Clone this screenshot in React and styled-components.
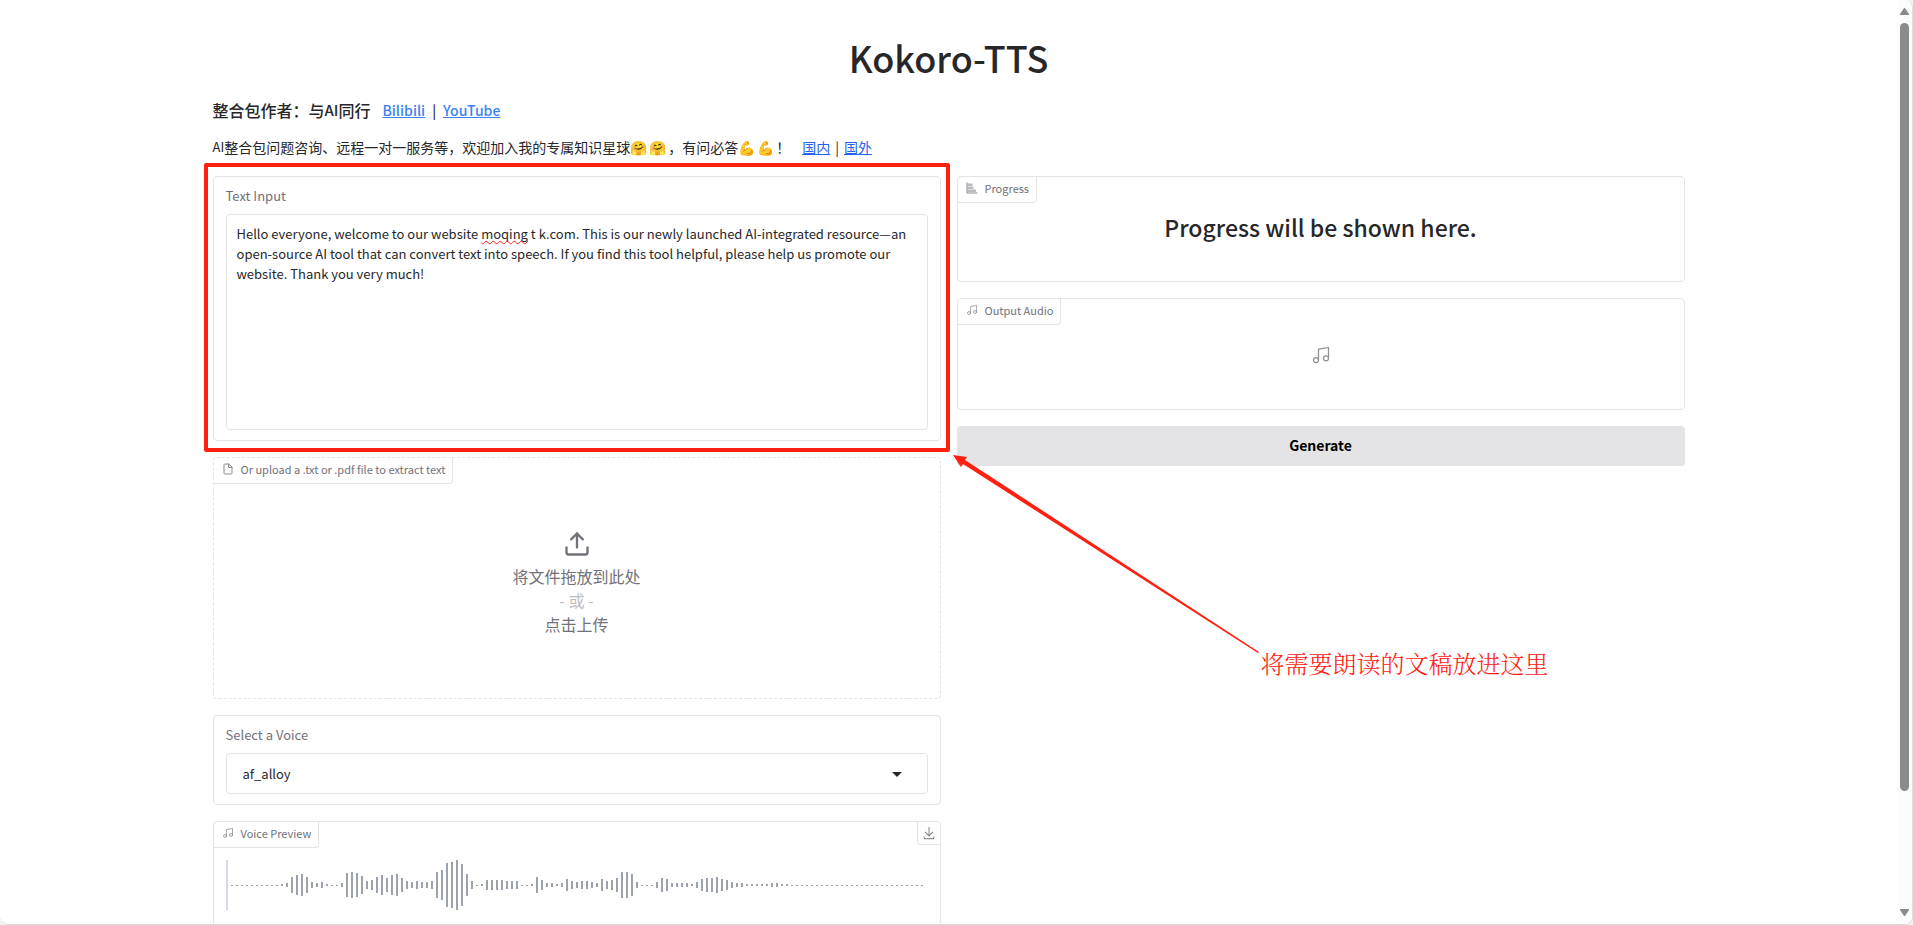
import React from 'react'
import styled, { createGlobalStyle } from 'styled-components'

const bars = [
    1, 1, 1, 1, 1, 1, 1, 1, 1, 1, 2, 4, 16, 20, 22, 16, 6, 4, 6, 2,
    1, 1, 4, 24, 26, 24, 18, 8, 10, 16, 20, 14, 20, 22, 14, 8, 6, 8, 6, 6,
    8, 26, 30, 44, 46, 50, 42, 22, 8, 1, 2, 10, 10, 10, 10, 8, 8, 8, 1, 1,
    2, 16, 10, 4, 4, 2, 4, 12, 8, 6, 8, 8, 6, 4, 12, 8, 10, 14, 26, 26,
    22, 6, 1, 1, 1, 6, 14, 12, 4, 4, 4, 4, 2, 6, 12, 14, 14, 16, 12, 10,
    6, 4, 4, 2, 2, 2, 2, 2, 4, 4, 2, 2,
    ...Array(27).fill(1),
]

const defaultText = 'Hello everyone, welcome to our website moqing t k.com. This is our newly launched AI-integrated resource—an open-source AI tool that can convert text into speech. If you find this tool helpful, please help us promote our website. Thank you very much!'

const MusicIcon = ({ size = 12 }) => (
    <svg width={size} height={size} viewBox="0 0 24 24" fill="none" stroke="currentColor" strokeWidth="1.5" strokeLinecap="round" strokeLinejoin="round">
        <path d="M9 18V5l12-2v13" />
        <circle cx="6" cy="18" r="3" />
        <circle cx="18" cy="16" r="3" />
    </svg>
)

const FileIcon = () => (
    <svg width="12" height="12" viewBox="0 0 24 24" fill="none" stroke="currentColor" strokeWidth="2" strokeLinecap="round" strokeLinejoin="round">
        <path d="M13 2H6a2 2 0 0 0-2 2v16a2 2 0 0 0 2 2h12a2 2 0 0 0 2-2V9z" />
        <path d="M13 2v7h7" />
    </svg>
)

const ChartIcon = () => (
    <svg width="12" height="12" viewBox="0 0 24 24" fill="currentColor">
        <path d="M1 1h2v20h20v2H1z" />
        <path d="M3 3h10v5H3zM3 9h12v5H3zM3 15h17v5H3z" fillOpacity="0.6" />
    </svg>
)

const UploadIcon = () => (
    <svg width="28" height="28" viewBox="0 0 24 24" fill="none" stroke="currentColor" strokeWidth="2" strokeLinecap="round" strokeLinejoin="round">
        <path d="M21 15v4a2 2 0 0 1-2 2H5a2 2 0 0 1-2-2v-4" />
        <path d="M17 8l-5-5-5 5" />
        <path d="M12 3v12" />
    </svg>
)

const DownloadIcon = () => (
    <svg width="14" height="14" viewBox="0 0 32 32" fill="currentColor">
        <path d="M26 24v4H6v-4H4v4a2 2 0 0 0 2 2h20a2 2 0 0 0 2-2v-4zm0-10l-1.41-1.41L17 20.17V2h-2v18.17l-7.59-7.58L6 14l10 10l10-10z" />
    </svg>
)

const Waveform = () => (
    <Wave width="100%" height="50">
        <rect x="0" y="0" width="2" height="50" fill="#ddd6e8" />
        {bars.map((h, i) => (
            <rect key={i} x={5 + i * 5} y={h === 1 ? 25 : 25 - h / 2} width="2" height={h} fill="#9ca3af" />
        ))}
    </Wave>
)

const Scrollbar = () => (
    <Track>
        <svg width="9" height="7" viewBox="0 0 9 7" fill="#8b8b8b"><path d="M4 0h1l4 6v1H0V6z" /></svg>
        <Rail>
            <Thumb />
        </Rail>
        <svg width="9" height="7" viewBox="0 0 9 7" fill="#8b8b8b"><path d="M4 7h1l4-6V0H0v1z" /></svg>
    </Track>
)

const App = () => {
    const [text, setText] = React.useState(defaultText)
    const [voice, setVoice] = React.useState('af_alloy')

    return (
        <>
            <GlobalStyle />
            <Window>
                <Content>
                    <Container>
                        <Title>Kokoro-TTS</Title>
                        <Author>
                            整合包作者：与<Latin $size={15}>AI</Latin>同行
                            <AuthorLinks>
                                <Link href="#bilibili" $light>Bilibili</Link>|<Link href="#youtube" $light>YouTube</Link>
                            </AuthorLinks>
                        </Author>
                        <Notice>
                            <Latin $size={13}>AI</Latin>整合包问题咨询、远程一对一服务等，欢迎加入我的专属知识星球<Emoji>🤗</Emoji><Emoji>🤗</Emoji>，有问必答<Emoji>💪</Emoji><Emoji>💪</Emoji>！
                            <NoticeLinks>
                                <Link href="#cn">国内</Link>|<Link href="#global">国外</Link>
                            </NoticeLinks>
                        </Notice>
                        <Columns>
                            <Column>
                                <Marked>
                                    <Card $padded>
                                        <Label htmlFor="text">Text Input</Label>
                                        <TextBox>
                                            <TextArea id="text" value={text} spellCheck={false} onChange={e => setText(e.target.value)} />
                                            <Misspelled>
                                                <Ghost>Hello everyone, welcome to our website </Ghost>
                                                <Squiggle>moqing</Squiggle>
                                            </Misspelled>
                                        </TextBox>
                                    </Card>
                                    <Highlight />
                                    <Arrow width="310" height="202" viewBox="0 0 310 202">
                                        <path d="M0 0L14 2 12 5 306 197 305 198 10 9 8 12z" fill="#ff2010" />
                                    </Arrow>
                                    <Callout>将需要朗读的文稿放进这里</Callout>
                                </Marked>
                                <Card $dashed>
                                    <Tag><FileIcon />Or upload a .txt or .pdf file to extract text</Tag>
                                    <DropZone type="button">
                                        <UploadIcon />
                                        <span>
                                            将文件拖放到此处
                                            <Or>- 或 -</Or>
                                            点击上传
                                        </span>
                                    </DropZone>
                                </Card>
                                <Card $padded>
                                    <Label htmlFor="voice">Select a Voice</Label>
                                    <SelectBox>
                                        <Select id="voice" value={voice} onChange={e => setVoice(e.target.value)}>
                                            <option value="af_alloy">af_alloy</option>
                                        </Select>
                                        <Caret width="10" height="5" viewBox="0 0 10 5"><path d="M0 0h10L5 5z" fill="#27272a" /></Caret>
                                    </SelectBox>
                                </Card>
                                <Card>
                                    <Tag><MusicIcon />Voice Preview</Tag>
                                    <Download type="button" aria-label="Download"><DownloadIcon /></Download>
                                    <Waveform />
                                </Card>
                            </Column>
                            <Column>
                                <Card>
                                    <Tag><ChartIcon />Progress</Tag>
                                    <Progress>Progress will be shown here.</Progress>
                                </Card>
                                <Card>
                                    <Tag><MusicIcon />Output Audio</Tag>
                                    <Empty><MusicIcon size={20} /></Empty>
                                </Card>
                                <Generate type="button">Generate</Generate>
                            </Column>
                        </Columns>
                    </Container>
                </Content>
                <Scrollbar />
            </Window>
        </>
    )
}

export default App

const GlobalStyle = createGlobalStyle`
    * {
        box-sizing: border-box;
    }
    body {
        margin: 0;
        background: #f3f3f3;
        color: #27272a;
        font-family: "Noto Sans CJK SC", sans-serif;
        font-size: 14px;
    }
    button, select, textarea {
        font-family: inherit;
        color: inherit;
    }
`

const Window = styled.div`
    display: flex;
    height: 100vh;
    overflow: hidden;
    background: #fff;
    border-right: 1px solid #dcdcdc;
    border-bottom: 1px solid #dcdcdc;
    border-radius: 0 8px 8px 8px;
`

const Content = styled.main`
    flex: 1;
    min-width: 0;
    overflow: hidden;
`

const Container = styled.div`
    max-width: 1536px;
    margin: 0 auto;
    padding: 32px;
`

const Title = styled.h1`
    margin: 0;
    text-align: center;
    font-size: 36px;
    line-height: 50px;
    font-weight: 500;
`

const Author = styled.h3`
    display: flex;
    margin: 16px 0 0;
    font-size: 16px;
    line-height: 24px;
    font-weight: 500;
`

const AuthorLinks = styled.span`
    display: flex;
    gap: 7px;
    margin-left: 12px;
    font-size: 14px;
`

const Notice = styled.p`
    display: flex;
    margin: 13px 0 17px;
    line-height: 24px;
`

const NoticeLinks = styled.span`
    display: flex;
    gap: 5px;
    margin-left: 12px;
`

const Latin = styled.span`
    font-size: ${props => props.$size}px;
`

const Emoji = styled.span`
    width: 19px;
`

const Link = styled.a`
    color: ${props => props.$light ? "#3b82f6" : "#2563eb"};
    text-decoration: underline;
`

const Columns = styled.div`
    display: flex;
    align-items: flex-start;
    gap: 16px;
`

const Column = styled.div`
    flex: 1;
    min-width: 0;
    display: flex;
    flex-direction: column;
    gap: 16px;
`

const Card = styled.section`
    position: relative;
    border: 1px ${props => props.$dashed ? "dashed" : "solid"} #e4e4e7;
    border-radius: 4px;
    padding: ${props => props.$padded ? "9px 12px 10px" : "0"};
`

const Label = styled.label`
    display: block;
    margin-bottom: 8px;
    font-size: 13px;
    line-height: 20px;
    color: #71717a;
`

const Tag = styled.div`
    display: inline-flex;
    align-items: center;
    gap: 7px;
    height: 26px;
    padding: 0 7px 3px 8px;
    border-right: 1px solid #e4e4e7;
    border-bottom: 1px solid #e4e4e7;
    border-radius: 3px 0 4px 0;
    font-size: 11px;
    line-height: 16px;
    color: #71717a;
    vertical-align: top;

    svg {
        opacity: 0.8;
    }
`

const TextBox = styled.div`
    position: relative;
`

const TextArea = styled.textarea`
    display: block;
    width: 100%;
    height: 216px;
    padding: 9px 10px;
    border: 1px solid #e4e4e7;
    border-radius: 4px;
    outline: none;
    resize: none;
    font-size: 13px;
    line-height: 20px;
`

/* sits over the first line of the textarea */
const Misspelled = styled.div`
    position: absolute;
    top: 10px;
    left: 11px;
    font-size: 13px;
    line-height: 20px;
    color: transparent;
    white-space: pre;
    pointer-events: none;
`

const Ghost = styled.span`
    visibility: hidden;
`

const Squiggle = styled.span`
    text-decoration: underline wavy #ff2020 1px;
    text-decoration-skip-ink: none;
`

const Marked = styled.div`
    position: relative;
`

const Highlight = styled.div`
    position: absolute;
    z-index: 2;
    top: -13px;
    right: -9px;
    bottom: -11px;
    left: -9px;
    border: 4px solid #ff2010;
    border-radius: 2px;
    pointer-events: none;
`

const Arrow = styled.svg`
    position: absolute;
    z-index: 2;
    top: calc(100% + 14px);
    left: calc(100% + 12px);
    pointer-events: none;
`

const Callout = styled.div`
    position: absolute;
    z-index: 2;
    top: calc(100% + 204px);
    left: calc(100% + 320px);
    font-family: "Noto Serif CJK SC", "Noto Sans CJK SC", serif;
    font-size: 24px;
    line-height: 36px;
    font-weight: 300;
    color: #ff2010;
    white-space: nowrap;
`

const DropZone = styled.button`
    display: flex;
    flex-direction: column;
    align-items: center;
    justify-content: center;
    gap: 6px;
    width: 100%;
    height: 214px;
    padding: 0 0 16px;
    border: none;
    background: none;
    font-size: 16px;
    line-height: 24px;
    color: #71717a;
    cursor: pointer;
`

const Or = styled.span`
    display: block;
    color: #bbbbc2;
`

const SelectBox = styled.div`
    position: relative;
`

const Select = styled.select`
    appearance: none;
    display: block;
    width: 100%;
    height: 41px;
    padding: 0 16px;
    border: 1px solid #e4e4e7;
    border-radius: 4px;
    background: #fff;
    font-size: 13px;
`

const Caret = styled.svg`
    position: absolute;
    top: 19px;
    right: 26px;
    pointer-events: none;
`

const Download = styled.button`
    position: absolute;
    top: 0;
    right: 0;
    display: flex;
    align-items: center;
    justify-content: center;
    width: 23px;
    height: 23px;
    padding: 0;
    border: none;
    border-left: 1px solid #e4e4e7;
    border-bottom: 1px solid #e4e4e7;
    border-radius: 0 3px 0 4px;
    background: #fff;
    color: #71717a;
`

const Wave = styled.svg`
    display: block;
    margin: 12px 0 100px;
    padding: 0 12px;
    overflow: visible;
`

const Progress = styled.h2`
    margin: 0;
    padding: 6px 0 36px;
    text-align: center;
    font-size: 23px;
    line-height: 36px;
    font-weight: 500;
`

const Empty = styled.div`
    display: flex;
    align-items: center;
    justify-content: center;
    height: 84px;
    padding-bottom: 24px;
    color: #8f8f95;
`

const Generate = styled.button`
    height: 40px;
    padding: 0 0 2px;
    border: none;
    border-radius: 4px;
    background: #e4e4e7;
    color: #000;
    font-size: 14px;
    font-weight: 600;
    cursor: pointer;
`

const Track = styled.aside`
    display: flex;
    flex-direction: column;
    align-items: center;
    width: 15px;
    padding: 8px 0;
    background: #fcfcfc;
`

const Rail = styled.div`
    flex: 1;
    width: 9px;
    padding: 8px 0;
`

const Thumb = styled.div`
    height: 87.5%;
    border-radius: 5px;
    background: #8b8b8b;
`
